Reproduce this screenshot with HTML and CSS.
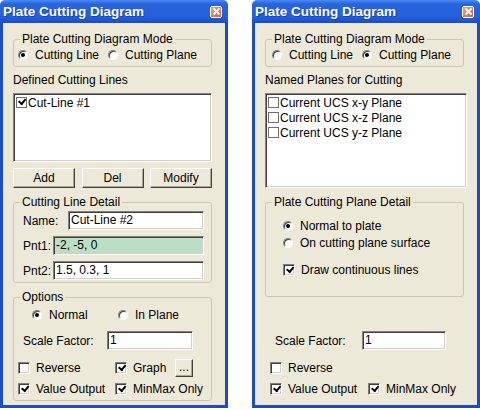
FILE: index.html
```html
<!DOCTYPE html>
<html lang="en">
<head>
    <meta charset="UTF-8">
    <link rel="stylesheet" href="styles.css">
    <title>Plate Cutting Diagram</title>
</head>
<body>

<div class="desktop">

    <!-- cutting line mode -->
    <div class="window">
        <div class="titlebar">
            <span>Plate Cutting Diagram</span>
            <span class="close"><svg width="9" height="9" viewBox="0 0 9 9"><path d="M1.5 1.5 L7.5 7.5 M7.5 1.5 L1.5 7.5" stroke="#fff" stroke-width="1.8"/></svg></span>
        </div>
        <div class="client">
            <fieldset class="group">
                <legend>Plate Cutting Diagram Mode</legend>
                <div class="choices mode-left">
                    <span class="opt w90"><i class="radio on"></i>Cutting Line</span>
                    <span class="opt"><i class="radio"></i>Cutting Plane</span>
                </div>
            </fieldset>

            <div class="caption">Defined Cutting Lines</div>
            <div class="listbox lines">
                <div class="item"><i class="tick on"></i>Cut-Line #1</div>
            </div>

            <div class="buttons">
                <span class="btn">Add</span>
                <span class="btn">Del</span>
                <span class="btn">Modify</span>
            </div>

            <fieldset class="group line-detail">
                <legend>Cutting Line Detail</legend>
                <div class="field first"><span class="lbl w45">Name:</span><span class="edit">Cut-Line #2</span></div>
                <div class="field"><span class="lbl w30">Pnt1:</span><span class="edit picked">-2, -5, 0</span></div>
                <div class="field"><span class="lbl w30">Pnt2:</span><span class="edit">1.5, 0.3, 1</span></div>
            </fieldset>

            <fieldset class="group options">
                <legend>Options</legend>
                <div class="choices view">
                    <span class="opt w86"><i class="radio on"></i>Normal</span>
                    <span class="opt"><i class="radio"></i>In Plane</span>
                </div>
                <div class="scale scale-left">
                    <span class="lbl w84">Scale Factor:</span><span class="edit w86">1</span>
                </div>
                <div class="checks checks-left">
                    <span class="opt w97"><i class="check"></i>Reverse</span>
                    <span class="opt w60"><i class="check on"></i>Graph</span>
                    <span class="btn more">...</span>
                </div>
                <div class="checks last checks-left">
                    <span class="opt w97"><i class="check on"></i>Value Output</span>
                    <span class="opt"><i class="check on"></i>MinMax Only</span>
                </div>
            </fieldset>
        </div>
    </div>

    <!-- cutting plane mode -->
    <div class="window">
        <div class="titlebar">
            <span>Plate Cutting Diagram</span>
            <span class="close"><svg width="9" height="9" viewBox="0 0 9 9"><path d="M1.5 1.5 L7.5 7.5 M7.5 1.5 L1.5 7.5" stroke="#fff" stroke-width="1.8"/></svg></span>
        </div>
        <div class="client">
            <fieldset class="group">
                <legend>Plate Cutting Diagram Mode</legend>
                <div class="choices mode-right">
                    <span class="opt w90"><i class="radio"></i>Cutting Line</span>
                    <span class="opt"><i class="radio on"></i>Cutting Plane</span>
                </div>
            </fieldset>

            <div class="caption">Named Planes for Cutting</div>
            <div class="listbox planes">
                <div class="item"><i class="tick"></i>Current UCS x-y Plane</div>
                <div class="item"><i class="tick"></i>Current UCS x-z Plane</div>
                <div class="item"><i class="tick"></i>Current UCS y-z Plane</div>
            </div>

            <fieldset class="group plane-detail">
                <legend>Plate Cutting Plane Detail</legend>
                <div class="row first"><span class="opt"><i class="radio on"></i>Normal to plate</span></div>
                <div class="row"><span class="opt"><i class="radio"></i>On cutting plane surface</span></div>
                <div class="row draw"><span class="opt"><i class="check on"></i>Draw continuous lines</span></div>
            </fieldset>

            <div class="scale scale-right">
                <span class="lbl w87">Scale Factor:</span><span class="edit w84">1</span>
            </div>
            <div class="checks checks-right">
                <span class="opt"><i class="check"></i>Reverse</span>
            </div>
            <div class="checks last checks-right">
                <span class="opt w98"><i class="check on"></i>Value Output</span>
                <span class="opt"><i class="check on"></i>MinMax Only</span>
            </div>
        </div>
    </div>

</div>

</body>
</html>
```

FILE: styles.css
```css
* {
    box-sizing: border-box;
}

body {
    margin: 0;
    background-color: #fff;
    font-family: "Liberation Sans", Arial, sans-serif;
    font-size: 12px;
    color: #000;
}

.desktop {
    display: flex;
    gap: 24px;
    width: 480px;
    height: 410px;
}

.window {
    width: 228px;
    height: 408px;
    display: flex;
    flex-direction: column;
}

.titlebar {
    flex: none;
    height: 23px;
    display: flex;
    align-items: center;
    justify-content: space-between;
    padding: 0 6px 0 3px;
    background: linear-gradient(#4a8cf4, #2764dd 4px, #2460da 17px, #1a4bc9);
    border-radius: 5px 5px 0 0;
    color: #fff;
    font-size: 13.5px;
    font-weight: bold;
    text-shadow: 1px 1px 0 #1a3fa8;
}

.close {
    width: 12px;
    height: 12px;
    display: flex;
    align-items: center;
    justify-content: center;
    border: 1px solid #fff;
    border-radius: 2px;
    background: linear-gradient(135deg, #f0a184, #d65a3c);
}

.client {
    flex: 1;
    background-color: #ece9d8;
    border: 3px solid #1c4cc6;
    border-top: 0;
    padding: 9px 0 0 10px;
}

/* group boxes */
.group {
    margin: 0;
    padding: 0;
    min-width: 0;
    width: 199px;
    border: 1px solid #cac7b8;
    border-radius: 3px;
}

.group legend {
    margin-left: 6px;
    padding: 0 2px;
    line-height: 14px;
}

.caption {
    margin-top: 6px;
    line-height: 14px;
}

/* radio and check items */
.opt {
    display: flex;
    align-items: center;
    white-space: nowrap;
}

.choices {
    display: flex;
    align-items: center;
    height: 14px;
    margin: 2px 0 4px 0;
}

.mode-left { padding-left: 4px; }
.mode-right { padding-left: 6px; }

.radio {
    flex: none;
    position: relative;
    width: 10px;
    height: 10px;
    margin-right: 7px;
    border-radius: 50%;
    border: 1px solid;
    border-color: #808080 #fff #fff #808080;
    background-color: #fff;
    box-shadow: inset 1px 1px 0 #404040;
}

.radio.on::after {
    content: "";
    position: absolute;
    left: 2px;
    top: 2px;
    width: 4px;
    height: 4px;
    border-radius: 50%;
    background-color: #000;
}

.check {
    flex: none;
    position: relative;
    width: 12px;
    height: 12px;
    margin-right: 6px;
    border: 1px solid;
    border-color: #808080 #fff #fff #808080;
    background-color: #fff;
    box-shadow: inset 1px 1px 0 #404040, inset -1px -1px 0 #d4d0c8;
}

.check.on::after,
.tick.on::after {
    content: "";
    position: absolute;
    left: 2px;
    top: 1px;
    width: 5px;
    height: 3px;
    border-left: 2px solid #000;
    border-bottom: 2px solid #000;
    transform: rotate(-50deg);
    transform-origin: 0 0;
    translate: 0 4px;
}

.tick.on::after {
    left: 1px;
    top: 0;
}

/* list boxes */
.listbox {
    margin-top: 6px;
    width: 199px;
    padding: 1px;
    background-color: #fff;
    border: 1px solid;
    border-color: #848284 #fff #fff #848284;
    box-shadow: inset 1px 1px 0 #424142, inset -1px -1px 0 #d4d0c8;
}

.lines { height: 69px; }
.planes { height: 95px; width: 202px; }

.item {
    display: flex;
    align-items: center;
    height: 15px;
    padding-left: 1px;
}

.tick {
    flex: none;
    position: relative;
    width: 11px;
    height: 11px;
    margin-right: 1px;
    border: 1px solid #6f6f6f;
    background-color: #fff;
}

/* push buttons */
.buttons {
    display: flex;
    justify-content: space-between;
    width: 199px;
    margin-top: 6px;
}

.btn {
    width: 62px;
    height: 20px;
    display: flex;
    align-items: center;
    justify-content: center;
    background-color: #ece9d8;
    border: 1px solid;
    border-color: #fff #404040 #404040 #fff;
    box-shadow: inset -1px -1px 0 #aca899;
}

.btn.more {
    width: 18px;
    height: 18px;
    padding-bottom: 3px;
}

/* edit rows */
.line-detail,
.options,
.plane-detail {
    margin-top: 7px;
}

.field {
    display: flex;
    align-items: center;
    height: 19px;
    margin: 6px 7px 0 9px;
}

.field.first {
    margin-top: 2px;
}

.line-detail {
    padding-bottom: 2px;
}

.lbl {
    flex: none;
    white-space: nowrap;
}

.edit {
    flex: 1;
    height: 19px;
    line-height: 17px;
    padding-left: 2px;
    background-color: #fff;
    border: 1px solid;
    border-color: #808080 #fff #fff #808080;
    box-shadow: inset 1px 1px 0 #404040, inset -1px -1px 0 #d4d0c8;
    white-space: nowrap;
}

.edit.picked {
    background-color: #bcdec4;
}

.w30 { width: 30px; }
.w45 { width: 45px; }
.w60 { width: 60px; }
.w84 { width: 84px; }
.w86 { width: 86px; }
.w87 { width: 87px; }
.w90 { width: 90px; }
.w97 { width: 97px; }
.w98 { width: 98px; }

.edit.w84,
.edit.w86 {
    flex: none;
}

/* options */
.options {
    padding-bottom: 4px;
}

.view {
    margin: 4px 0 0 18px;
}

.scale {
    display: flex;
    align-items: center;
    height: 19px;
    margin-top: 9px;
}

.scale-left { margin-left: 9px; }
.scale-right { margin-top: 34px; margin-left: 10px; }

.checks {
    display: flex;
    align-items: center;
    height: 18px;
    margin-top: 9px;
}

.checks.last {
    height: 14px;
    margin-top: 5px;
}

.checks-left { margin-left: 4px; }
.checks-right { margin-left: 5px; }

/* plane detail */
.plane-detail {
    padding-bottom: 19px;
}

.row {
    display: flex;
    align-items: center;
    height: 14px;
    margin: 3px 0 0 17px;
}

.row.first { margin-top: 10px; }
.row.draw { margin-top: 13px; }
```
